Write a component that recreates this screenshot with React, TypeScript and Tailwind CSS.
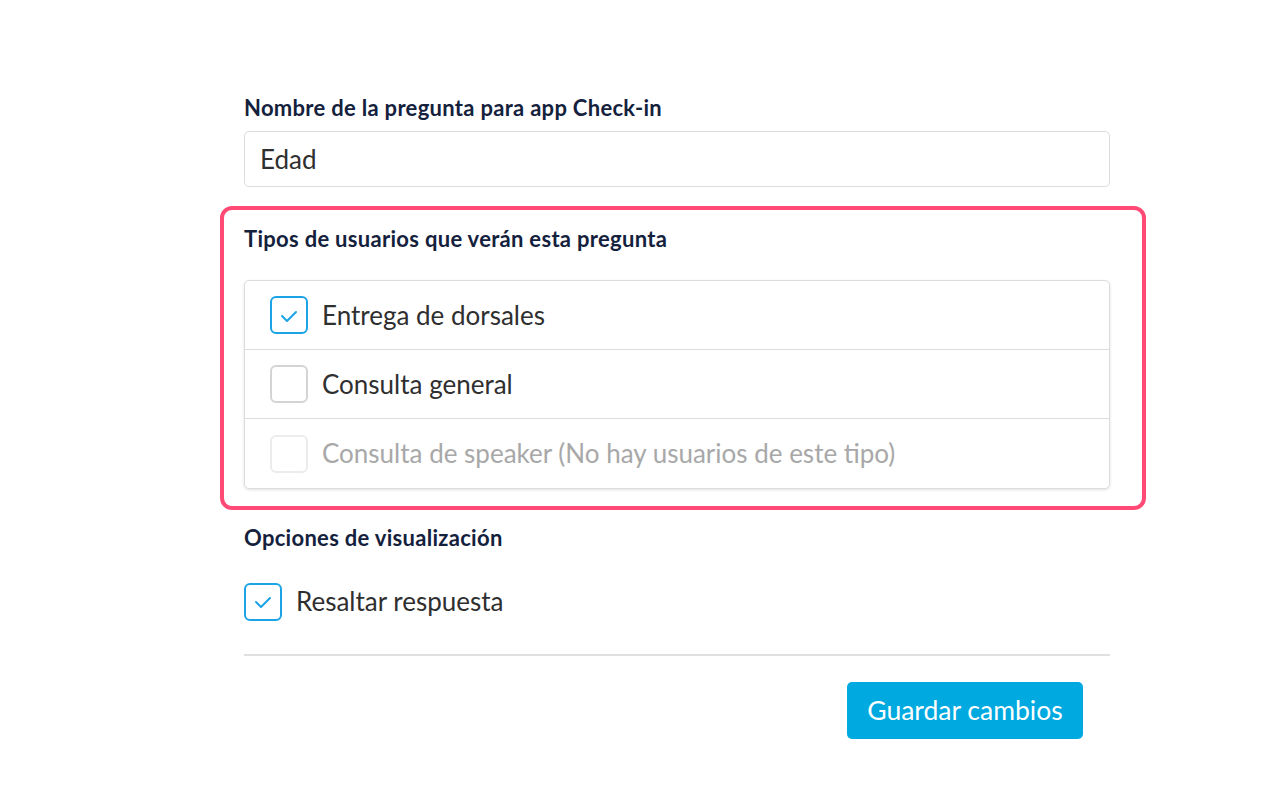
import React, { useState } from 'react';

const font = { fontFamily: 'Lato, "Noto Sans", sans-serif' };

interface CheckProps {
  checked: boolean;
  disabled?: boolean;
  onToggle?: () => void;
}

const Checkbox: React.FC<CheckProps> = ({ checked, disabled, onToggle }) => (
  <button
    type="button"
    disabled={disabled}
    onClick={onToggle}
    className={
      'w-[38px] h-[38px] shrink-0 rounded-[6px] border-2 flex items-center justify-center bg-white ' +
      (checked ? 'border-[#1ba3e6]' : disabled ? 'border-[#ececec]' : 'border-[#d4d4d4]')
    }
  >
    {checked && (
      <svg width="18" height="13" viewBox="0 0 18 13" fill="none" className="mt-[2px]">
        <path d="M2 6 L7 11 L16 2" stroke="#1ba3e6" strokeWidth="2" strokeLinecap="round" strokeLinejoin="round" />
      </svg>
    )}
  </button>
);

const userTypes = [
  { id: 'dorsales', label: 'Entrega de dorsales', disabled: false },
  { id: 'general', label: 'Consulta general', disabled: false },
  { id: 'speaker', label: 'Consulta de speaker (No hay usuarios de este tipo)', disabled: true },
];

export default function App() {
  const [name, setName] = useState('Edad');
  const [selected, setSelected] = useState<string[]>(['dorsales']);
  const [highlight, setHighlight] = useState(true);

  const toggle = (id: string) =>
    setSelected(s => (s.includes(id) ? s.filter(x => x !== id) : [...s, id]));

  return (
    <div className="w-[1280px] h-[800px] bg-white overflow-hidden" style={font}>
      <div className="ml-[244px] w-[866px] pt-[96px] flex flex-col">
        {/* Question name */}
        <label className="text-[22px] leading-[24px] font-bold tracking-[0.3px] text-[#14213d]">
          Nombre de la pregunta para app Check-in
        </label>
        <input
          value={name}
          onChange={e => setName(e.target.value)}
          className="mt-[11px] h-[56px] w-full rounded-[5px] border border-[#dcdcdc] px-[15px] text-[26px] text-[#2f2f2f] outline-none"
          style={font}
        />

        {/* User types (highlighted) */}
        <div className="mt-[19px] -ml-[24px] w-[926px] rounded-[12px] border-4 border-[#ff4a75] pl-[20px] pr-[32px] pt-[17px] pb-[17px]">
          <h3 className="text-[22px] leading-[24px] font-bold tracking-[0.3px] text-[#14213d]">
            Tipos de usuarios que verán esta pregunta
          </h3>
          <div className="mt-[29px] rounded-[5px] border border-[#dcdcdc] shadow-[0_1px_3px_rgba(0,0,0,0.12)] divide-y divide-[#dcdcdc]">
            {userTypes.map(t => (
              <div key={t.id} className="h-[69px] flex items-center pl-[25px] gap-[14px]">
                <Checkbox
                  checked={selected.includes(t.id)}
                  disabled={t.disabled}
                  onToggle={() => toggle(t.id)}
                />
                <span className={'text-[26px] ' + (t.disabled ? 'text-[#a8a8a8]' : 'text-[#2f2f2f]')}>
                  {t.label}
                </span>
              </div>
            ))}
          </div>
        </div>

        {/* Display options */}
        <h3 className="mt-[16px] text-[22px] leading-[24px] font-bold tracking-[0.3px] text-[#14213d]">
          Opciones de visualización
        </h3>
        <div className="mt-[32px] flex items-center gap-[14px]">
          <Checkbox checked={highlight} onToggle={() => setHighlight(h => !h)} />
          <span className="text-[26px] text-[#2f2f2f]">Resaltar respuesta</span>
        </div>

        <div className="mt-[33px] h-[2px] bg-[#e0e0e0]" />

        <div className="mt-[26px] flex justify-end pr-[27px]">
          <button className="h-[57px] w-[236px] rounded-[5px] bg-[#00a9e0] text-white text-[26.5px]">
            Guardar cambios
          </button>
        </div>
      </div>
    </div>
  );
}
